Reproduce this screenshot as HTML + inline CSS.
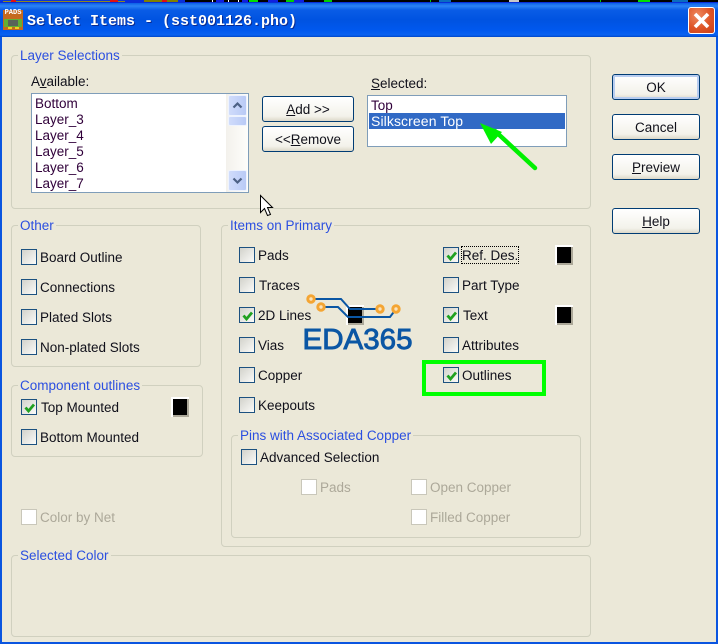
<!DOCTYPE html>
<html><head><meta charset="utf-8"><style>
html,body{margin:0;padding:0;background:#ece9d8}
#r{position:relative;width:718px;height:644px;overflow:hidden;background:#ebe8d8;font:13.5px/18px "Liberation Sans",sans-serif;color:#10101a}
#r div,#r span.t{position:absolute;white-space:nowrap}
.g{border:1px solid #d0d0bf;border-radius:4px;box-sizing:border-box}
.l{color:#2b4fe0;background:#ebe8d8;padding:0 2px;line-height:16px}
.c{width:16px;height:16px;box-sizing:border-box;border:1px solid #1c5180;background:linear-gradient(135deg,#d2d2cb,#fbfbf9)}
.c svg{position:absolute;left:1px;top:1px}
.d{width:16px;height:16px;box-sizing:border-box;border:1px solid #c9c7ba;background:#fff}
.x{color:#aca899}
.b{box-sizing:border-box;border:1px solid #003c74;border-radius:3px;background:linear-gradient(#fff,#f3f2ea 80%,#dcd8c8);text-align:center;color:#10101a}
.s{width:18px;height:20px;background:#fff}
.s i{position:absolute;display:block;left:2px;top:2px;width:16px;height:18px;background:#aca899}
.s b{position:absolute;display:block;left:2px;top:2px;width:14px;height:16px;background:#000}
.i{left:35px;color:#30003a}
.sb{left:228px;width:19px;box-sizing:border-box;border:1px solid #eef3fe;border-radius:2px;background:linear-gradient(90deg,#d0dcfb,#b9caf6)}
</style></head><body><div id="r">

<!-- title bar -->
<div style="left:0;top:0;width:718px;height:37px;background:linear-gradient(#0a5ae0 0,#0a5fe8 3px,#2c83f5 6px,#0a5ce6 10px,#0053e1 20px,#0058ee 30px,#0a62f0 35px,#0046c8 37px)"></div>
<div style="left:0;top:0;width:718px;height:3px;background:#0a2fd8"></div>
<div style="left:0;top:0;width:125px;height:1px;background:#0a37d8"></div>
<div style="left:3px;top:1px;width:122px;height:1px;background:#8c8a20"></div>
<div style="left:11px;top:0;width:5px;height:2px;background:#e01010"></div>
<div style="left:110px;top:0;width:8px;height:2px;background:#e01010"></div>
<div style="left:144px;top:0;width:18px;height:2px;background:#808000"></div>
<div style="left:162px;top:0;width:5px;height:2px;background:#e01010"></div>
<div style="left:167px;top:0;width:11px;height:2px;background:#808000"></div>
<div style="left:185px;top:0;width:175px;height:2px;background:#000"></div>
<div style="left:216px;top:0;width:8px;height:2px;background:#1020e0"></div>
<div style="left:242px;top:0;width:6px;height:2px;background:#1020e0"></div>
<div style="left:249px;top:0;width:9px;height:2px;background:#00e000"></div>
<div style="left:268px;top:0;width:10px;height:2px;background:#1020e0"></div>
<div style="left:286px;top:0;width:8px;height:2px;background:#00d000"></div>
<div style="left:294px;top:0;width:10px;height:2px;background:#1020e0"></div>
<div style="left:324px;top:0;width:8px;height:2px;background:#00d000"></div>
<div style="left:212px;top:0;width:1px;height:2px;background:#fff"></div>
<div style="left:228px;top:0;width:1px;height:2px;background:#fff"></div>
<div style="left:238px;top:0;width:1px;height:2px;background:#fff"></div>
<div style="left:360px;top:0;width:358px;height:2px;background:#000"></div>
<div style="left:430px;top:0;width:1px;height:2px;background:#00d000"></div>
<div style="left:439px;top:0;width:12px;height:2px;background:#0a6cc0"></div>
<div style="left:509px;top:0;width:10px;height:2px;background:#c8c8c8"></div>
<div style="left:600px;top:0;width:1px;height:2px;background:#00d000"></div>
<div style="left:638px;top:0;width:12px;height:2px;background:#00e000"></div>
<div style="left:672px;top:0;width:16px;height:2px;background:#0a6cc0"></div>

<!-- PADS icon -->
<div style="left:3px;top:10px;width:20px;height:20px;background:#c4691f"></div>
<div style="left:3px;top:9px;width:20px;height:9px;font:bold 7px/9px 'Liberation Mono',monospace;color:#fff;text-align:center">PADS</div>
<div style="left:4px;top:19px;width:18px;height:8px;background:#62b034"></div>
<div style="left:8px;top:20px;width:10px;height:6px;background:#5a6458"></div>
<div style="left:8px;top:27px;width:4px;height:2px;background:#f0d020"></div>
<div style="left:15px;top:27px;width:4px;height:2px;background:#f0d020"></div>
<div style="left:27px;top:12px;font:bold 15px/20px 'Liberation Mono',monospace;color:#fff;text-shadow:1px 1px 0 #0a2a90">Select Items - (sst001126.pho)</div>

<!-- close -->
<div style="left:688px;top:7px;width:27px;height:27px;box-sizing:border-box;border:1px solid #fff;border-radius:3px;background:radial-gradient(circle at 35% 30%,#ee8a60,#de5426 55%,#c8401a)"></div>
<svg style="position:absolute;left:688px;top:7px" width="27" height="27"><path d="M7 7L20 20M20 7L7 20" stroke="#fff" stroke-width="3.6" fill="none"/></svg>

<!-- window borders -->
<div style="left:0;top:37px;width:2px;height:607px;background:#0a55e0"></div>
<div style="left:716px;top:37px;width:2px;height:607px;background:#0a55e0"></div>
<div style="left:0;top:642px;width:718px;height:2px;background:#0a55e0"></div>

<!-- groups -->
<div class="g" style="left:11px;top:55px;width:580px;height:154px"></div>
<div class="l" style="left:18px;top:48px">Layer Selections</div>
<div class="g" style="left:11px;top:225px;width:190px;height:142px"></div>
<div class="l" style="left:18px;top:218px">Other</div>
<div class="g" style="left:11px;top:385px;width:192px;height:72px"></div>
<div class="l" style="left:18px;top:378px">Component outlines</div>
<div class="g" style="left:221px;top:225px;width:370px;height:322px"></div>
<div class="l" style="left:228px;top:218px">Items on Primary</div>
<div class="g" style="left:231px;top:435px;width:350px;height:103px"></div>
<div class="l" style="left:238px;top:428px">Pins with Associated Copper</div>
<div class="g" style="left:11px;top:555px;width:580px;height:82px"></div>
<div class="l" style="left:18px;top:548px">Selected Color</div>

<!-- layer section -->
<div style="left:31px;top:73px">A<u>v</u>ailable:</div>
<div style="left:31px;top:93px;width:218px;height:100px;box-sizing:border-box;border:1px solid #7f9db9;background:#fff"></div>
<div class="i" style="top:95px">Bottom</div>
<div class="i" style="top:111px">Layer_3</div>
<div class="i" style="top:127px">Layer_4</div>
<div class="i" style="top:143px">Layer_5</div>
<div class="i" style="top:159px">Layer_6</div>
<div class="i" style="top:175px">Layer_7</div>
<div style="left:226px;top:94px;width:22px;height:98px;background:linear-gradient(90deg,#f3f1ec,#fefefb)"></div>
<div class="sb" style="top:95px;height:21px"></div>
<div class="sb" style="top:116px;height:10px"></div>
<div class="sb" style="top:170px;height:21px"></div>
<svg style="position:absolute;left:228px;top:95px" width="19" height="96"><path d="M5.5 12.5L9.5 8.5L13.5 12.5" stroke="#4d6185" stroke-width="2.2" fill="none"/><path d="M5.5 83.5L9.5 87.5L13.5 83.5" stroke="#4d6185" stroke-width="2.2" fill="none"/></svg>

<div class="b" style="left:262px;top:96px;width:92px;height:26px;line-height:25px"><u>A</u>dd &gt;&gt;</div>
<div class="b" style="left:262px;top:126px;width:92px;height:26px;line-height:25px">&lt;&lt;<u>R</u>emove</div>

<div style="left:371px;top:75px"><u>S</u>elected:</div>
<div style="left:367px;top:95px;width:200px;height:52px;box-sizing:border-box;border:1px solid #7f9db9;background:#fff"></div>
<div style="left:371px;top:97px;color:#30003a">Top</div>
<div style="left:369px;top:113px;width:196px;height:16px;background:#316ac5"></div>
<div style="left:371px;top:112px;color:#fff;font-size:14px;letter-spacing:.1px">Silkscreen Top</div>

<!-- right buttons -->
<div class="b" style="left:612px;top:74px;width:88px;height:26px;line-height:25px;box-shadow:inset 0 0 0 2px #b8cdf0">OK</div>
<div class="b" style="left:612px;top:114px;width:88px;height:26px;line-height:25px">Cancel</div>
<div class="b" style="left:612px;top:154px;width:88px;height:26px;line-height:25px"><u>P</u>review</div>
<div class="b" style="left:612px;top:208px;width:88px;height:26px;line-height:25px"><u>H</u>elp</div>

<!-- other -->
<div class="c" style="left:21px;top:249px"></div><div style="left:40px;top:249px">Board Outline</div>
<div class="c" style="left:21px;top:279px"></div><div style="left:40px;top:279px">Connections</div>
<div class="c" style="left:21px;top:309px"></div><div style="left:40px;top:309px">Plated Slots</div>
<div class="c" style="left:21px;top:339px"></div><div style="left:40px;top:339px">Non-plated Slots</div>

<!-- component -->
<div class="c" style="left:21px;top:399px"><svg width="14" height="14"><path d="M2.5 6.5L5.5 10L11 3.5" stroke="#21a121" stroke-width="2.8" fill="none"/></svg></div><div style="left:41px;top:399px">Top Mounted</div>
<div class="s" style="left:171px;top:397px"><i></i><b></b></div>
<div class="c" style="left:21px;top:429px"></div><div style="left:40px;top:429px">Bottom Mounted</div>

<div class="d" style="left:21px;top:509px"></div><div class="x" style="left:40px;top:509px">Color by Net</div>

<!-- items left -->
<div class="c" style="left:239px;top:247px"></div><div style="left:258px;top:247px">Pads</div>
<div class="c" style="left:239px;top:277px"></div><div style="left:259px;top:277px">Traces</div>
<div class="c" style="left:239px;top:307px"><svg width="14" height="14"><path d="M2.5 6.5L5.5 10L11 3.5" stroke="#21a121" stroke-width="2.8" fill="none"/></svg></div><div style="left:258px;top:307px">2D Lines</div>
<div class="c" style="left:239px;top:337px"></div><div style="left:258px;top:337px">Vias</div>
<div class="c" style="left:239px;top:367px"></div><div style="left:258px;top:367px">Copper</div>
<div class="c" style="left:239px;top:397px"></div><div style="left:258px;top:397px">Keepouts</div>

<!-- items right -->
<div class="c" style="left:443px;top:247px"><svg width="14" height="14"><path d="M2.5 6.5L5.5 10L11 3.5" stroke="#21a121" stroke-width="2.8" fill="none"/></svg></div><div style="left:462px;top:247px">Ref. Des.</div>
<div style="left:461px;top:246px;width:58px;height:18px;box-sizing:border-box;border:1px dotted #000"></div>
<div class="s" style="left:555px;top:245px"><i></i><b></b></div>
<div class="c" style="left:443px;top:277px"></div><div style="left:462px;top:277px">Part Type</div>
<div class="c" style="left:443px;top:307px"><svg width="14" height="14"><path d="M2.5 6.5L5.5 10L11 3.5" stroke="#21a121" stroke-width="2.8" fill="none"/></svg></div><div style="left:463px;top:307px">Text</div>
<div class="s" style="left:555px;top:305px"><i></i><b></b></div>
<div class="c" style="left:443px;top:337px"></div><div style="left:462px;top:337px">Attributes</div>
<div class="c" style="left:443px;top:367px"><svg width="14" height="14"><path d="M2.5 6.5L5.5 10L11 3.5" stroke="#21a121" stroke-width="2.8" fill="none"/></svg></div><div style="left:462px;top:367px">Outlines</div>

<!-- pins -->
<div class="c" style="left:241px;top:449px"></div><div style="left:260px;top:449px">Advanced Selection</div>
<div class="d" style="left:301px;top:479px"></div><div class="x" style="left:320px;top:479px">Pads</div>
<div class="d" style="left:411px;top:479px"></div><div class="x" style="left:430px;top:479px">Open Copper</div>
<div class="d" style="left:411px;top:509px"></div><div class="x" style="left:430px;top:509px">Filled Copper</div>

<!-- swatch under logo -->
<div class="s" style="left:346px;top:305px;width:18px"><i></i><b></b></div>

<!-- overlays -->
<svg style="position:absolute;left:0;top:0" width="718" height="644">
<rect x="424" y="362" width="120" height="32" fill="none" stroke="#00ff00" stroke-width="4"/>
<path d="M311 299L341 299L350 309L380 309" fill="none" stroke="#0a56a4" stroke-width="2"/>
<path d="M321 307L338 307L348 317L390 317L396 309" fill="none" stroke="#0a56a4" stroke-width="2"/>
<g fill="#fbe3bd" stroke="#f4a533" stroke-width="3"><circle cx="311" cy="299" r="3.2"/><circle cx="321" cy="307" r="3.2"/><circle cx="380" cy="309" r="3.2"/><circle cx="396" cy="309" r="3.2"/></g>
<text x="302.5" y="349" font-family="Liberation Sans" font-size="29" textLength="110" lengthAdjust="spacingAndGlyphs" fill="#0a56a4" stroke="#0a56a4" stroke-width=".9">EDA365</text>
<path d="M535 168L495 131" stroke="#00f000" stroke-width="4.5" stroke-linecap="round" fill="none"/>
<path d="M480 123L502 132L491 144Z" fill="#00f000"/>
<path d="M260.5 195.5V212.5L264.5 208.5L267.5 215.5L270.5 214.5L267.5 207.5L272.5 207.5Z" fill="#fff" stroke="#000" stroke-width="1"/>
</svg>
</div></body></html>
